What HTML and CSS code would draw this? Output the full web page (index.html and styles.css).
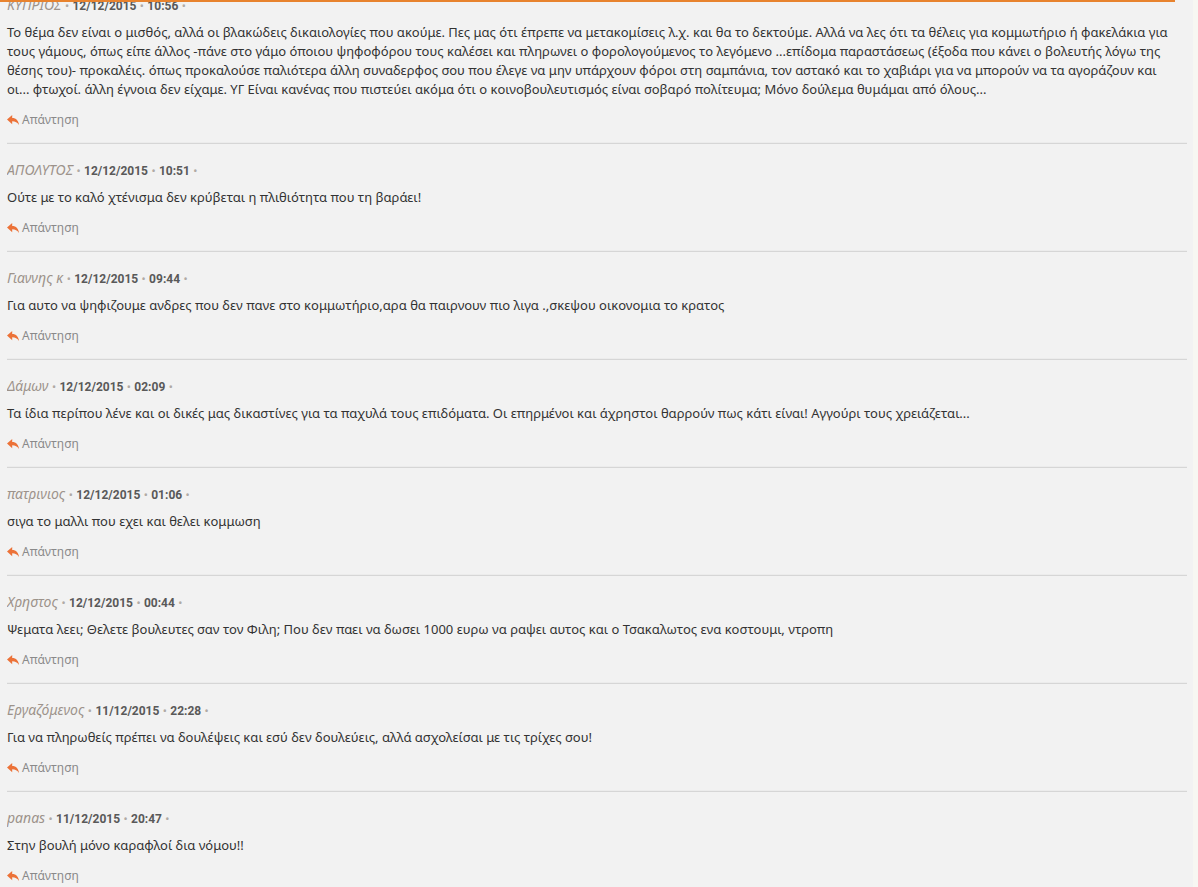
FILE: index.html
```html
<!DOCTYPE html>
<html lang="el">
<head>
    <meta charset="UTF-8">
    <title>Σχόλια</title>
    <link rel="stylesheet" href="styles.css">
</head>
<body>
    <div class="top-bar"></div>
    <div class="comments">
        <div class="comment first">
            <div class="meta"><span class="author">ΚΥΠΡΙΟΣ</span> <span class="dot">•</span> <span class="date">12/12/2015</span> <span class="dot">•</span> <span class="date">10:56</span> <span class="dot">•</span></div>
            <p class="text">Το θέμα δεν είναι ο μισθός, αλλά οι βλακώδεις δικαιολογίες που ακούμε. Πες μας ότι έπρεπε να μετακομίσεις λ.χ. και θα το δεκτούμε. Αλλά να λες ότι τα θέλεις για κομμωτήριο ή φακελάκια για τους γάμους, όπως είπε άλλος -πάνε στο γάμο όποιου ψηφοφόρου τους καλέσει και πληρωνει ο φορολογούμενος το λεγόμενο ...επίδομα παραστάσεως (έξοδα που κάνει ο βολευτής λόγω της θέσης του)- προκαλέις. όπως προκαλούσε παλιότερα άλλη συναδερφος σου που έλεγε να μην υπάρχουν φόροι στη σαμπάνια, τον αστακό και το χαβιάρι για να μπορούν να τα αγοράζουν και οι... φτωχοί. άλλη έγνοια δεν είχαμε. ΥΓ Είναι κανένας που πιστεύει ακόμα ότι ο κοινοβουλευτισμός είναι σοβαρό πολίτευμα; Μόνο δούλεμα θυμάμαι από όλους...</p>
            <a class="reply" href="#"><svg viewBox="0 0 12 10" width="12" height="10"><path d="M5.2 0 L0 4.6 L5.2 9.2 V6.3 C8.2 6.3 10.4 7.4 12 10 C11.6 5.6 9.2 2.9 5.2 2.9 Z"/></svg>Απάντηση</a>
        </div>
        <div class="comment">
            <div class="meta"><span class="author">ΑΠΟΛΥΤΟΣ</span> <span class="dot">•</span> <span class="date">12/12/2015</span> <span class="dot">•</span> <span class="date">10:51</span> <span class="dot">•</span></div>
            <p class="text">Ούτε με το καλό χτένισμα δεν κρύβεται η πλιθιότητα που τη βαράει!</p>
            <a class="reply" href="#"><svg viewBox="0 0 12 10" width="12" height="10"><path d="M5.2 0 L0 4.6 L5.2 9.2 V6.3 C8.2 6.3 10.4 7.4 12 10 C11.6 5.6 9.2 2.9 5.2 2.9 Z"/></svg>Απάντηση</a>
        </div>
        <div class="comment">
            <div class="meta"><span class="author">Γιαννης κ</span> <span class="dot">•</span> <span class="date">12/12/2015</span> <span class="dot">•</span> <span class="date">09:44</span> <span class="dot">•</span></div>
            <p class="text">Για αυτο να ψηφιζουμε ανδρες που δεν πανε στο κομμωτήριο,αρα θα παιρνουν πιο λιγα .,σκεψου οικονομια το κρατος</p>
            <a class="reply" href="#"><svg viewBox="0 0 12 10" width="12" height="10"><path d="M5.2 0 L0 4.6 L5.2 9.2 V6.3 C8.2 6.3 10.4 7.4 12 10 C11.6 5.6 9.2 2.9 5.2 2.9 Z"/></svg>Απάντηση</a>
        </div>
        <div class="comment">
            <div class="meta"><span class="author">Δάμων</span> <span class="dot">•</span> <span class="date">12/12/2015</span> <span class="dot">•</span> <span class="date">02:09</span> <span class="dot">•</span></div>
            <p class="text">Τα ίδια περίπου λένε και οι δικές μας δικαστίνες για τα παχυλά τους επιδόματα. Οι επηρμένοι και άχρηστοι θαρρούν πως κάτι είναι! Αγγούρι τους χρειάζεται...</p>
            <a class="reply" href="#"><svg viewBox="0 0 12 10" width="12" height="10"><path d="M5.2 0 L0 4.6 L5.2 9.2 V6.3 C8.2 6.3 10.4 7.4 12 10 C11.6 5.6 9.2 2.9 5.2 2.9 Z"/></svg>Απάντηση</a>
        </div>
        <div class="comment">
            <div class="meta"><span class="author">πατρινιος</span> <span class="dot">•</span> <span class="date">12/12/2015</span> <span class="dot">•</span> <span class="date">01:06</span> <span class="dot">•</span></div>
            <p class="text">σιγα το μαλλι που εχει και θελει κομμωση</p>
            <a class="reply" href="#"><svg viewBox="0 0 12 10" width="12" height="10"><path d="M5.2 0 L0 4.6 L5.2 9.2 V6.3 C8.2 6.3 10.4 7.4 12 10 C11.6 5.6 9.2 2.9 5.2 2.9 Z"/></svg>Απάντηση</a>
        </div>
        <div class="comment">
            <div class="meta"><span class="author">Χρηστος</span> <span class="dot">•</span> <span class="date">12/12/2015</span> <span class="dot">•</span> <span class="date">00:44</span> <span class="dot">•</span></div>
            <p class="text">Ψεματα λεει; Θελετε βουλευτες σαν τον Φιλη; Που δεν παει να δωσει 1000 ευρω να ραψει αυτος και ο Τσακαλωτος ενα κοστουμι, ντροπη</p>
            <a class="reply" href="#"><svg viewBox="0 0 12 10" width="12" height="10"><path d="M5.2 0 L0 4.6 L5.2 9.2 V6.3 C8.2 6.3 10.4 7.4 12 10 C11.6 5.6 9.2 2.9 5.2 2.9 Z"/></svg>Απάντηση</a>
        </div>
        <div class="comment">
            <div class="meta"><span class="author">Εργαζόμενος</span> <span class="dot">•</span> <span class="date">11/12/2015</span> <span class="dot">•</span> <span class="date">22:28</span> <span class="dot">•</span></div>
            <p class="text">Για να πληρωθείς πρέπει να δουλέψεις και εσύ δεν δουλεύεις, αλλά ασχολείσαι με τις τρίχες σου!</p>
            <a class="reply" href="#"><svg viewBox="0 0 12 10" width="12" height="10"><path d="M5.2 0 L0 4.6 L5.2 9.2 V6.3 C8.2 6.3 10.4 7.4 12 10 C11.6 5.6 9.2 2.9 5.2 2.9 Z"/></svg>Απάντηση</a>
        </div>
        <div class="comment">
            <div class="meta"><span class="author">panas</span> <span class="dot">•</span> <span class="date">11/12/2015</span> <span class="dot">•</span> <span class="date">20:47</span> <span class="dot">•</span></div>
            <p class="text">Στην βουλή μόνο καραφλοί δια νόμου!!</p>
            <a class="reply" href="#"><svg viewBox="0 0 12 10" width="12" height="10"><path d="M5.2 0 L0 4.6 L5.2 9.2 V6.3 C8.2 6.3 10.4 7.4 12 10 C11.6 5.6 9.2 2.9 5.2 2.9 Z"/></svg>Απάντηση</a>
        </div>
    </div>
</body>
</html>
```

FILE: styles.css
```css
body {
    margin: 0;
    background: #f7f7f2;
    font-family: 'Noto Sans', 'Open Sans', sans-serif;
    overflow: hidden;
}
.top-bar {
    position: absolute;
    top: 0;
    left: 0;
    width: 1175px;
    height: 2px;
    background: #e8832e;
    z-index: 2;
}
.comments {
    width: 1193px;
    min-height: 887px;
    background: #f2f2f2;
    box-sizing: border-box;
    padding: 0 6px 0 7px;
}
.comment {
    padding: 16px 0 13px 0;
    border-bottom: 1px solid #d6d6d6;
    box-shadow: 0 -1px 0 #ececec inset;
}
.comment.first {
    margin-top: -21px;
}
.meta {
    height: 20px;
    line-height: 20px;
    font-size: 13px;
    white-space: nowrap;
    overflow: hidden;
}
.author {
    font-style: italic;
    font-size: 14px;
    color: #9d938b;
}
.dot {
    color: #b0aaa5;
    font-size: 11px;
}
.date {
    font-family: Roboto, 'Liberation Sans', sans-serif;
    font-weight: bold;
    font-size: 12px;
    color: #595959;
}
.text {
    margin: 8px 0 0 0;
    padding-right: 6px;
    font-size: 13px;
    line-height: 19px;
    color: #333;
}
.reply {
    display: flex;
    align-items: center;
    gap: 3px;
    height: 20px;
    margin-top: 11px;
    line-height: 20px;
    font-size: 12px;
    color: #8a8a8a;
    text-decoration: none;
}
.reply svg {
    fill: #ec7238;
}
```
